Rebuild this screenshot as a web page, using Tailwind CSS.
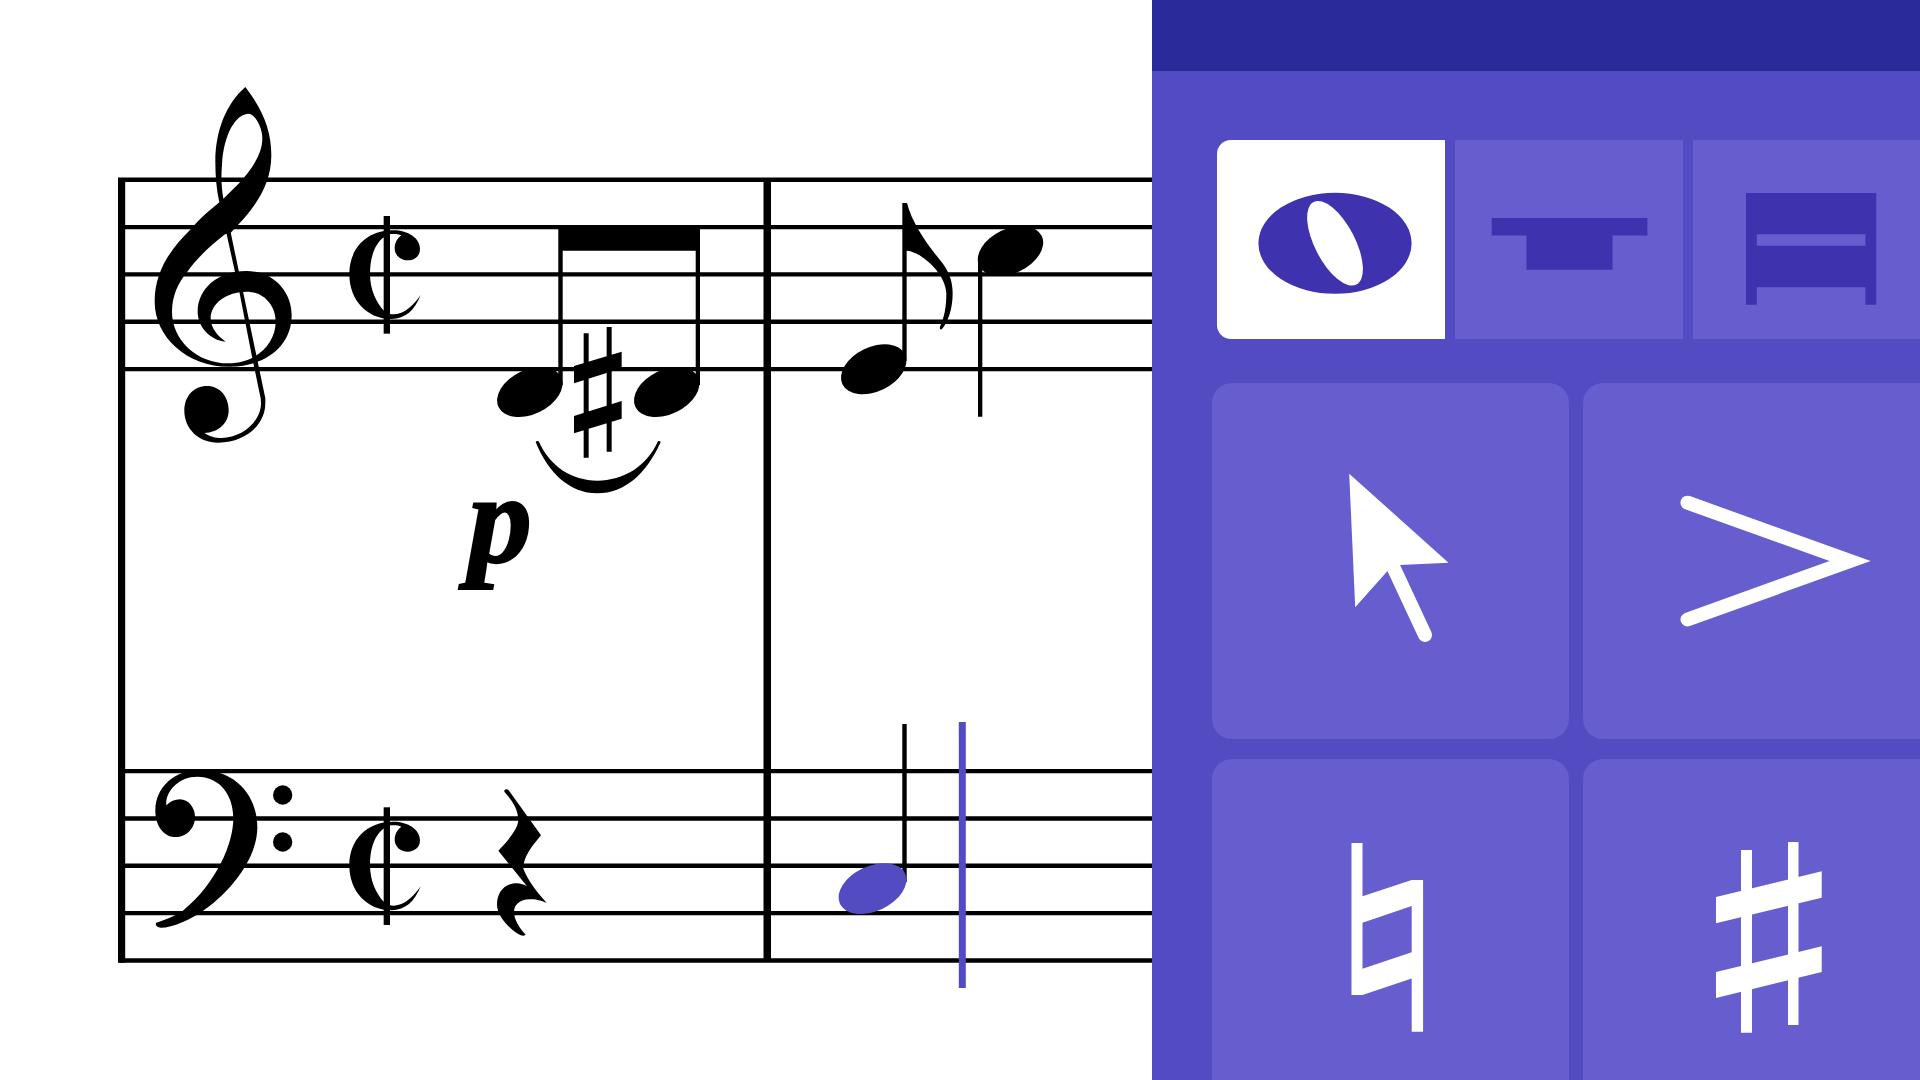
<!-- index.html - Score view with the notation palette -->
<!DOCTYPE html>
<html lang="en">
  <head>
    <meta charset="UTF-8" />
    <meta name="viewport" content="width=device-width, initial-scale=1.0" />
    <title>Score editor</title>
    <script src="https://cdn.jsdelivr.net/npm/@tailwindcss/browser@4"></script>
  </head>

  <body class="flex h-screen overflow-hidden bg-white">
    <!-- Score -->
    <main class="w-3/5 shrink-0">
      <svg class="size-full" viewBox="0 0 1152 1080" preserveAspectRatio="xMaxYMid slice" role="img" aria-label="Score">
        <defs>
          <!-- glyphs are drawn at 3x and scaled down -->
          <g id="cut-time">
            <path d="M932 675C915 720 885 747 845 747C770 747 718 690 718 612C718 535 770 481 850 481C895 481 930 505 930 537C930 558 914 571 893 571C872 571 854 556 854 535C854 518 862 505 874 496C865 492 855 491 842 492C805 502 780 545 780 612C780 660 800 700 822 722C830 730 840 733 852 733C885 733 915 700 932 675Z" />
            <path d="M821 438H840V791H821Z" />
          </g>
          <ellipse id="head" rx="34.7" ry="22.2" transform="rotate(-25.7)" />
          <g id="staff">
            <path d="M118 179.7H1152M118 227.1H1152M118 274.4H1152M118 321.7H1152M118 369.1H1152" stroke="#000" stroke-width="4.4" />
          </g>
        </defs>

        <use href="#staff" />
        <use href="#staff" y="591.4" />
        <!-- bar lines -->
        <path d="M120 178H125.2V962.7H120L118 961V179.5Z" />
        <path d="M763.5 178H771V962H763.5Z" />

        <!-- treble clef -->
        <g transform="translate(110 70) scale(.33333)">
          <path fill-rule="evenodd" d="M406 51C458 118 484 180 484 255C484 350 430 420 362 488L345 493C300 528 260 565 230 608C203 640 186 680 186 725C186 810 260 880 355 880C440 880 497 820 497 755C497 705 460 665 410 665C350 665 302 700 302 745C302 775 325 800 347 815C300 810 263 770 263 725C263 655 325 603 408 603C490 603 545 665 545 735C545 830 465 890 357 890C230 890 134 800 134 695C134 600 185 535 240 480C270 445 300 420 328 397C320 360 316 320 316 275C316 180 350 100 406 51ZM340 386C334 350 333 320 336 285C341 190 378 131 417 131C433 131 457 170 457 205C457 255 422 302 385 342Z" />
          <path d="M348 484L361 482L466 985V1000C466 1065 405 1118 325 1118C265 1118 223 1075 223 1022C223 978 252 948 291 948C330 948 356 980 356 1021C356 1060 325 1088 283 1089C300 1100 315 1104 335 1104C395 1104 453 1055 453 1000L452 985L427 865L388 665Z" />
        </g>
        <use href="#cut-time" transform="translate(110 70) scale(.33333)" />

        <!-- beamed pair with sharp and slur -->
        <path d="M558.3 225H700V385H695.7V250.7H562.7V385H558.3Z" />
        <use href="#head" x="529.8" y="392" />
        <use href="#head" x="666.7" y="392" />
        <g transform="translate(430 200) scale(.33333)">
          <path d="M461 400H476V773H461ZM530 381H545V755H530ZM432 498L575 455V505L432 550ZM432 648L575 603V656L432 700Z" />
          <path d="M317 726Q320 721 326 724C360 800 425 842 502 842C580 842 650 800 684 724Q688 721 692 726C650 820 585 880 502 880C420 880 355 820 317 726Z" />
        </g>
        <text x="468" y="562" font-family="'Liberation Serif', serif" font-size="128" font-weight="700" font-style="italic" stroke="#000" stroke-width="2">p</text>

        <!-- eighth note and quarter note -->
        <use href="#head" x="873.7" y="369.3" />
        <use href="#head" x="1010.5" y="251" />
        <g transform="translate(740 160) scale(.33333)">
          <path d="M487 129H501C515 185 555 245 600 300C625 330 638 360 638 400C638 445 625 485 606 507C602 511 598 506 600 500C614 470 619 440 619 400C617 335 535 272 500 272V603H487ZM714 292H727V770H714Z" />
        </g>

        <!-- bass clef -->
        <g transform="translate(110 740) scale(.33333)">
          <path d="M139 548C165 540 190 530 217 514C320 430 370 310 370 235C370 160 325 110 262 110C205 110 165 155 169 196C180 185 195 178 210 178C235 178 255 203 255 230C255 265 230 291 196 291C160 291 136 255 136 212C136 140 195 90 270 90C375 90 442 165 442 262C442 365 345 470 275 515C240 538 190 563 152 563C140 563 134 552 139 548Z" />
          <circle cx="518" cy="165" r="29" />
          <circle cx="518" cy="306" r="29" />
        </g>
        <use href="#cut-time" transform="translate(110 661.3) scale(.33333)" />

        <!-- quarter rest -->
        <path transform="translate(460 740) scale(.33333)" d="M133 151C137 147 143 147 146 151L243 286C215 320 190 350 190 386C205 425 235 460 260 489C240 480 225 478 208 478C180 478 162 495 162 515C162 540 180 565 197 584C190 589 185 587 175 582C140 560 112 525 111 495C111 455 135 430 170 430C182 430 192 434 201 439L115 332C150 295 175 265 175 238C173 205 155 180 133 155Z" />

        <!-- selected note and cursor -->
        <path d="M902.3 724H906.7V882H902.3Z" />
        <ellipse rx="36" ry="22.5" transform="translate(872.5 888.6) rotate(-25)" fill="#524bc2" />
        <path d="M958.8 722H965.8V988H958.8Z" fill="#524bc2" />
      </svg>
    </main>

    <!-- Palette -->
    <aside class="flex w-2/5 flex-col overflow-hidden bg-[#524bc2]">
      <header class="h-[71px] shrink-0 bg-[#2a2a9b]"></header>

      <div class="mt-[69px] ml-[65px] flex shrink-0 gap-[10px]" role="group" aria-label="Durations">
        <button class="h-[199px] w-[228px] shrink-0 rounded-l-[14px] bg-white text-[#3e32ae]" aria-label="Whole note" aria-pressed="true">
          <svg class="size-full" viewBox="1217 140 228 199" fill="currentColor">
            <ellipse cx="1335" cy="243.3" rx="76.6" ry="50.5" />
            <ellipse rx="46.5" ry="20.1" transform="translate(1335 243.3) rotate(62.6)" fill="#fff" />
          </svg>
        </button>
        <button class="h-[199px] w-[228px] shrink-0 bg-[#665dcf] text-[#3e32ae]" aria-label="Half rest" aria-pressed="false">
          <svg class="size-full" viewBox="1455 140 228 199" fill="currentColor">
            <path d="M1491.7 218H1647.4V235.5H1612.5V269.7H1526.5V235.5H1491.7Z" />
          </svg>
        </button>
        <button class="h-[199px] w-[228px] shrink-0 bg-[#665dcf] text-[#3e32ae]" aria-label="Beam" aria-pressed="false">
          <svg class="size-full" viewBox="1693 140 228 199" fill="currentColor">
            <path fill-rule="evenodd" d="M1746 193H1876.3V304.7H1865.4V287.3H1756.8V304.7H1746ZM1756.8 234.3V245.7H1865.4V234.3Z" />
          </svg>
        </button>
      </div>

      <div class="mt-[44px] ml-[60px] grid shrink-0 grid-cols-[357px_357px] gap-x-[14px] gap-y-5">
        <button class="h-[356px] rounded-[20px] bg-[#665dcf] text-white" aria-label="Select">
          <svg class="size-full" viewBox="1212 383 357 356" fill="currentColor">
            <path d="M1349.2 473.7L1448.5 562.7L1400.2 565L1387.3 571.3L1355.2 607.3Z" />
            <path d="M1390 560L1425 635" stroke="currentColor" stroke-width="14" stroke-linecap="round" />
          </svg>
        </button>
        <button class="h-[356px] rounded-[20px] bg-[#665dcf] text-white" aria-label="Accent">
          <svg class="size-full" viewBox="1583 383 357 356" fill="none">
            <path d="M1687.5 502.7L1850 561L1687.5 619.5" stroke="currentColor" stroke-width="14" stroke-linecap="round" />
          </svg>
        </button>
        <button class="h-[356px] rounded-[20px] bg-[#665dcf] text-white" aria-label="Natural">
          <svg class="size-full" viewBox="1212 759 357 356" fill="currentColor">
            <path fill-rule="evenodd" d="M1351.5 843H1362.5V896.3L1411.7 880H1423.1V1031.7H1411.7V978.5L1362.5 995H1351.5ZM1362.5 922.7V968.7L1411.7 952.3V906Z" />
          </svg>
        </button>
        <button class="h-[356px] rounded-[20px] bg-[#665dcf] text-white" aria-label="Sharp">
          <svg class="size-full" viewBox="1583 759 357 356" fill="currentColor">
            <path d="M1741 850H1752V1032.7H1741ZM1788 842H1798.5V1025H1788ZM1716 897L1821.7 871.3V897.7L1716 923.3ZM1716 972L1821.7 946.3V972L1716 998Z" />
          </svg>
        </button>
      </div>
    </aside>
  </body>
</html>
